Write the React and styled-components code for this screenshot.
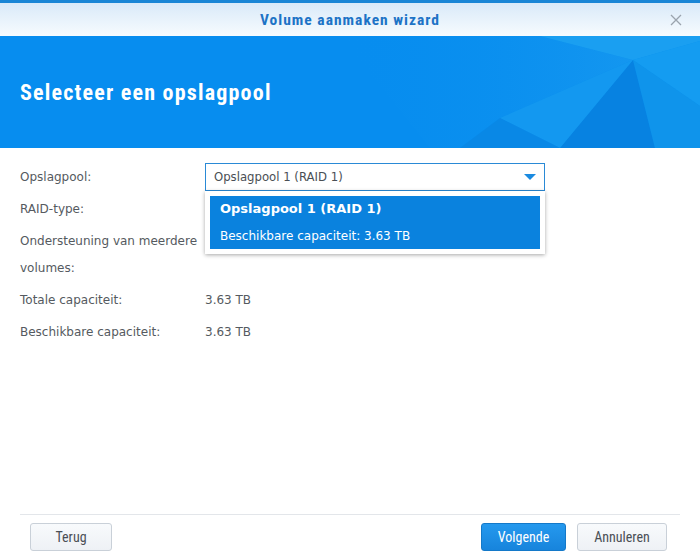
import React from "react";
import styled, { createGlobalStyle } from "styled-components";

const Global = createGlobalStyle`
  html, body { margin: 0; padding: 0; background: #ffffff; }
  #root { width: 700px; height: 560px; }
`;

const Window = styled.div`
  width: 700px;
  height: 560px;
  display: flex;
  flex-direction: column;
  background: #fff;
  border-top: 3px solid #1a86d6;
  box-sizing: border-box;
`;

const TitleBar = styled.div`
  height: 33px;
  display: grid;
  grid-template-columns: 1fr auto 1fr;
  align-items: center;
  background: linear-gradient(#d9eaf9, #f7fbfe);
`;

const Title = styled.div`
  grid-column: 2;
  font-family: "Liberation Sans Narrow", "Roboto Condensed", Roboto, sans-serif;
  font-weight: bold;
  font-size: 15.5px;
  letter-spacing: 1px;
  color: #1d73c6;
`;

const Close = styled.div`
  grid-column: 3;
  justify-self: end;
  margin-right: 16px;
  width: 16px;
  height: 16px;
  display: flex;
  align-items: center;
  justify-content: center;
`;

const Banner = styled.div`
  position: relative;
  height: 112px;
  background: #078def;
  display: flex;
  align-items: center;
  overflow: hidden;
`;

const BannerArt = styled.svg`
  position: absolute;
  inset: 0;
`;

const Heading = styled.h1`
  position: relative;
  margin: 0 0 0 20px;
  font-family: "Liberation Sans Narrow", "Roboto Condensed", Roboto, sans-serif;
  font-weight: bold;
  font-size: 22px;
  letter-spacing: 1.2px;
  color: #ffffff;
`;

const Content = styled.div`
  flex: 1;
  padding: 13px 20px 0 20px;
  display: grid;
  grid-template-columns: 185px 340px;
  grid-auto-rows: min-content;
  align-content: start;
  font-family: "DejaVu Sans", Verdana, sans-serif;
  font-size: 12px;
  color: #555a60;
`;

const Label = styled.div`
  line-height: ${(p) => (p.$wrap ? "27px" : "32px")};
  padding: ${(p) => (p.$wrap ? "3px 0 2px" : "0")};
  min-height: 32px;
`;

const Value = styled.div`
  line-height: 32px;
  position: relative;
`;

const SelectBox = styled.div`
  margin-top: 2px;
  height: 28px;
  box-sizing: border-box;
  border: 1px solid #2a8ad6;
  display: flex;
  align-items: center;
  justify-content: space-between;
  padding: 0 8px 0 8px;
  color: #4a4f55;
  font-size: 11.7px;
`;

const Menu = styled.div`
  position: absolute;
  left: 0;
  top: 30px;
  width: 340px;
  box-sizing: border-box;
  padding: 5px;
  background: #fff;
  box-shadow: 0 1px 4px rgba(0, 0, 0, 0.35);
  z-index: 2;
`;

const MenuItem = styled.div`
  background: #0a82de;
  color: #fff;
  padding: 0 10px;
`;

const MenuLine = styled.div`
  line-height: 26.5px;
  font-weight: ${(p) => (p.$bold ? "bold" : "normal")};
  font-size: ${(p) => (p.$bold ? "13px" : "12px")};
`;

const Footer = styled.div`
  margin: 0 20px;
  border-top: 1px solid #e3e6ea;
  padding: 8px 13px 9px 10px;
  display: flex;
  align-items: center;
  gap: 11px;
`;

const Spacer = styled.div`
  flex: 1;
`;

const Button = styled.button`
  height: 28px;
  box-sizing: border-box;
  padding: 0;
  width: ${(p) => p.$w}px;
  border-radius: 3px;
  font-family: "Liberation Sans Narrow", "Roboto Condensed", Roboto, sans-serif;
  font-size: 14px;
  cursor: pointer;
  ${(p) =>
    p.$primary
      ? `
    background: linear-gradient(#2599ee, #1784dc);
    border: 1px solid #1479c9;
    color: #fff;
  `
      : `
    background: linear-gradient(#f8fafc, #eef1f5);
    border: 1px solid #c9d0d8;
    color: #4a4f55;
  `}
`;

export default function App() {
  return (
    <>
      <Global />
      <Window>
        <TitleBar>
          <Title>Volume aanmaken wizard</Title>
          <Close>
            <svg width="12" height="12" viewBox="0 0 12 12">
              <path d="M1 1 L11 11 M11 1 L1 11" stroke="#9aa3ad" strokeWidth="1.3" />
            </svg>
          </Close>
        </TitleBar>
        <Banner>
          <BannerArt width="700" height="112" viewBox="0 0 700 112">
            <defs>
              <linearGradient id="sweep" x1="0" y1="0" x2="1" y2="0">
                <stop offset="0" stopColor="#078def" stopOpacity="0" />
                <stop offset="1" stopColor="#1c9df0" stopOpacity="0.6" />
              </linearGradient>
            </defs>
            <polygon points="340,0 540,0 633,24 500,82 460,112 430,112" fill="url(#sweep)" />
            <polygon points="540,0 700,0 700,5 633,24" fill="#22a5f2" opacity="0.75" />
            <polygon points="633,24 700,5 700,70" fill="#18a0f1" opacity="0.8" />
            <polygon points="633,24 560,112 655,112" fill="#0780de" opacity="0.85" />
            <polygon points="633,24 655,112 700,112 700,70" fill="#1095ea" opacity="0.85" />
            <polygon points="500,82 560,112 633,24" fill="#1ea2f1" opacity="0.55" />
            <polygon points="460,112 500,82 560,112" fill="#0a86e3" opacity="0.7" />
          </BannerArt>
          <Heading>Selecteer een opslagpool</Heading>
        </Banner>
        <Content>
          <Label>Opslagpool:</Label>
          <Value>
            <SelectBox>
              <span>Opslagpool 1 (RAID 1)</span>
              <svg width="12" height="7" viewBox="0 0 12 7">
                <polygon points="0,0 12,0 6,6" fill="#1a8ae0" />
              </svg>
            </SelectBox>
            <Menu>
              <MenuItem>
                <MenuLine $bold>Opslagpool 1 (RAID 1)</MenuLine>
                <MenuLine>Beschikbare capaciteit: 3.63 TB</MenuLine>
              </MenuItem>
            </Menu>
          </Value>
          <Label>RAID-type:</Label>
          <Value />
          <Label $wrap>
            Ondersteuning van meerdere
            <br />
            volumes:
          </Label>
          <Value />
          <Label>Totale capaciteit:</Label>
          <Value>3.63 TB</Value>
          <Label>Beschikbare capaciteit:</Label>
          <Value>3.63 TB</Value>
        </Content>
        <Footer>
          <Button $w={82}>Terug</Button>
          <Spacer />
          <Button $primary $w={85}>Volgende</Button>
          <Button $w={90}>Annuleren</Button>
        </Footer>
      </Window>
    </>
  );
}
